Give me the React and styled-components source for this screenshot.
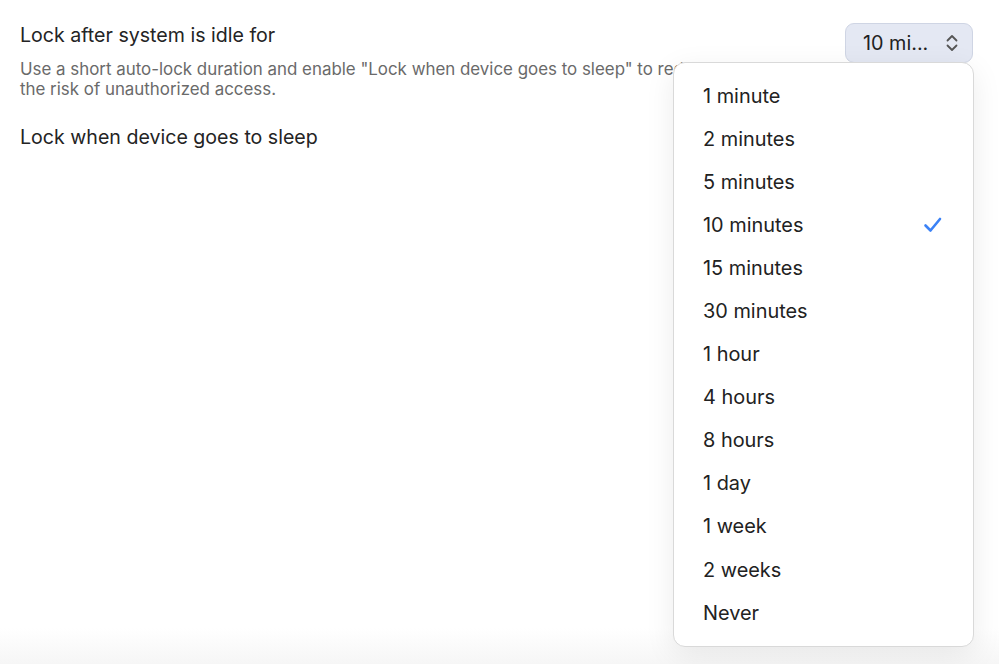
import React from "react";
import styled, { createGlobalStyle } from "styled-components";

const Global = createGlobalStyle`
  html, body { margin: 0; padding: 0; background: #fff; }
  body { font-family: Inter, "Noto Sans", sans-serif; -webkit-font-smoothing: antialiased; }
`;

const Page = styled.div`
  position: relative;
  width: 999px;
  height: 664px;
  overflow: hidden;
  background: linear-gradient(to bottom, #fff 0px, #fff 628px, #f6f6f6 664px);
`;

const Settings = styled.div`
  display: flex;
  flex-direction: column;
  gap: 26px;
  padding: 23px 26px 0 20px;
`;

const Row = styled.div`
  display: flex;
  align-items: flex-start;
  justify-content: space-between;
`;

const TextCol = styled.div`
  display: flex;
  flex-direction: column;
  gap: 12px;
  width: 716px;
`;

const Title = styled.div`
  font-size: 19.6px;
  line-height: 24px;
  color: #242424;
`;

const Desc = styled.div`
  font-size: 16.9px;
  line-height: 20px;
  color: #6a6a6a;
`;

const SelectButton = styled.div`
  display: flex;
  align-items: center;
  justify-content: space-between;
  flex-shrink: 0;
  box-sizing: border-box;
  width: 128px;
  height: 40px;
  padding: 0 13px 0 17px;
  border: 1px solid #cfd5e4;
  border-radius: 9px;
  background: #e4e8f3;
  font-size: 19.8px;
  color: #222;
`;

const Menu = styled.div`
  position: absolute;
  left: 673px;
  top: 62px;
  width: 301px;
  box-sizing: border-box;
  padding: 11px 0 12px;
  background: #fff;
  border: 1px solid #d9d9d9;
  border-radius: 12px;
  box-shadow: 0 8px 30px rgba(0, 0, 0, 0.08);
  display: flex;
  flex-direction: column;
`;

const Item = styled.div`
  display: flex;
  align-items: center;
  justify-content: space-between;
  height: 43.1px;
  padding: 0 30px 0 29px;
  font-size: 19.9px;
  color: #222;
`;

const Check = () => (
  <svg width="20" height="18" viewBox="0 0 20 18" fill="none">
    <path d="M2.5 9.5 L7.5 14.5 L17 3" stroke="#3b82f6" strokeWidth="2.6" strokeLinecap="round" strokeLinejoin="round" />
  </svg>
);

const Chevrons = () => (
  <svg width="14" height="20" viewBox="0 0 14 20" fill="none">
    <path d="M2.5 7.5 L7 3 L11.5 7.5 M2.5 12.5 L7 17 L11.5 12.5" stroke="#555" strokeWidth="1.8" strokeLinecap="round" strokeLinejoin="round" />
  </svg>
);

const options = [
  "1 minute", "2 minutes", "5 minutes", "10 minutes", "15 minutes", "30 minutes",
  "1 hour", "4 hours", "8 hours", "1 day", "1 week", "2 weeks", "Never",
];

export default function App() {
  return (
    <Page>
      <Global />
      <Settings>
        <Row>
          <TextCol>
            <Title>Lock after system is idle for</Title>
            <Desc>
              Use a short auto-lock duration and enable "Lock when device goes to sleep" to reduce the risk of unauthorized access.
            </Desc>
          </TextCol>
          <SelectButton>
            <span>10 mi...</span>
            <Chevrons />
          </SelectButton>
        </Row>
        <Row>
          <Title>Lock when device goes to sleep</Title>
        </Row>
      </Settings>
      <Menu>
        {options.map((o) => (
          <Item key={o}>
            <span>{o}</span>
            {o === "10 minutes" && <Check />}
          </Item>
        ))}
      </Menu>
    </Page>
  );
}
